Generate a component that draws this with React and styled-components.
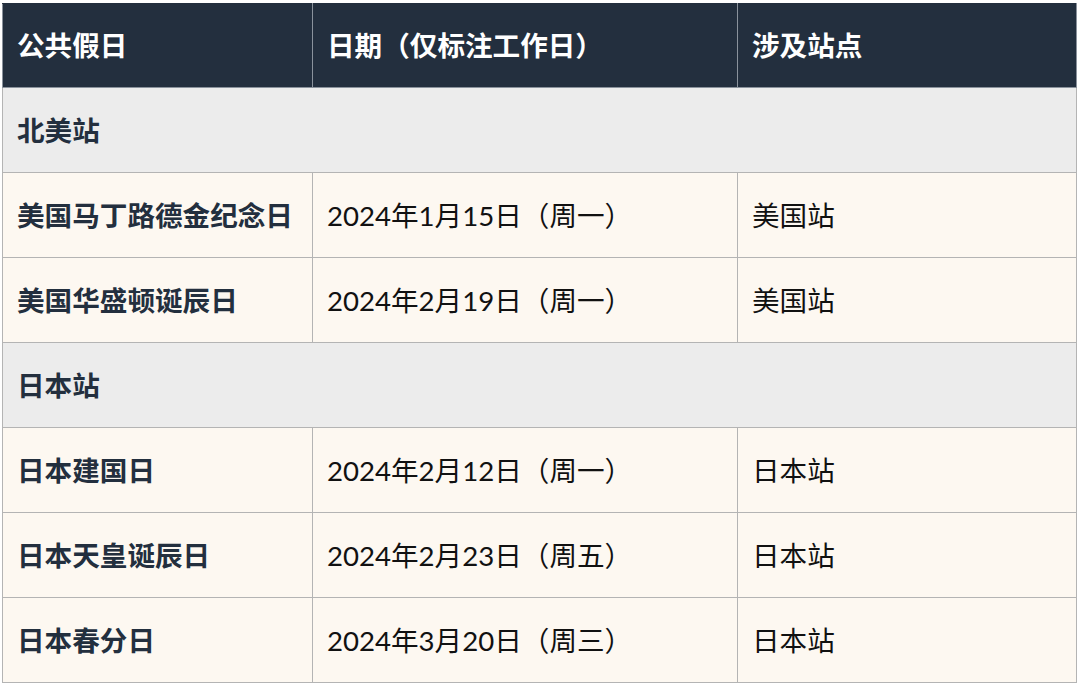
import React from "react";
import styled, {createGlobalStyle} from "styled-components";

const GlobalStyle = createGlobalStyle`
  body {
    margin: 0;
    background: #ffffff;
    font-family: Lato, "Noto Sans CJK SC", sans-serif;
  }
`;

const groups = [
    {
        name: "北美站",
        rows: [
            ["美国马丁路德金纪念日", "2024年1月15日（周一）", "美国站"],
            ["美国华盛顿诞辰日", "2024年2月19日（周一）", "美国站"],
        ],
    },
    {
        name: "日本站",
        rows: [
            ["日本建国日", "2024年2月12日（周一）", "日本站"],
            ["日本天皇诞辰日", "2024年2月23日（周五）", "日本站"],
            ["日本春分日", "2024年3月20日（周三）", "日本站"],
        ],
    },
];

function App() {
    return (
        <>
            <GlobalStyle/>
            <Page>
                <Table>
                    <colgroup>
                        <col style={{width: 310}}/>
                        <col style={{width: 425}}/>
                        <col/>
                    </colgroup>
                    <thead>
                    <tr>
                        <HeadCell>公共假日</HeadCell>
                        <HeadCell>日期（仅标注工作日）</HeadCell>
                        <HeadCell>涉及站点</HeadCell>
                    </tr>
                    </thead>
                    <tbody>
                    {groups.map((g) => (
                        <React.Fragment key={g.name}>
                            <tr>
                                <GroupCell colSpan={3}>{g.name}</GroupCell>
                            </tr>
                            {g.rows.map((r) => (
                                <tr key={r[0]}>
                                    <Cell $bold>{r[0]}</Cell>
                                    <Cell>{r[1]}</Cell>
                                    <Cell>{r[2]}</Cell>
                                </tr>
                            ))}
                        </React.Fragment>
                    ))}
                    </tbody>
                </Table>
            </Page>
        </>
    );
}

export default App;

const Page = styled.div`
  padding: 3px 3px 0 2px;
`;

const Table = styled.table`
  width: 1075px;
  border-collapse: collapse;
  table-layout: fixed;
  font-size: 27.6px;
`;

const HeadCell = styled.th`
  height: 84px;
  box-sizing: border-box;
  padding: 0 14px 4px;
  text-align: left;
  font-weight: 700;
  color: #ffffff;
  background: #232f3e;
  border: 1px solid #8a929c;
  border-top-color: #232f3e;
  white-space: nowrap;
`;

const GroupCell = styled.td`
  height: 85px;
  box-sizing: border-box;
  padding: 0 14px 2px;
  font-weight: 700;
  color: #232f3e;
  background: #ececec;
  border: 1px solid #b4b4b4;
`;

const Cell = styled.td`
  height: 85px;
  box-sizing: border-box;
  padding: 0 14px 2px;
  font-weight: ${(p) => (p.$bold ? 700 : 400)};
  color: ${(p) => (p.$bold ? "#232f3e" : "#111111")};
  background: #fdf8f1;
  border: 1px solid #b4b4b4;
  white-space: nowrap;
`;
